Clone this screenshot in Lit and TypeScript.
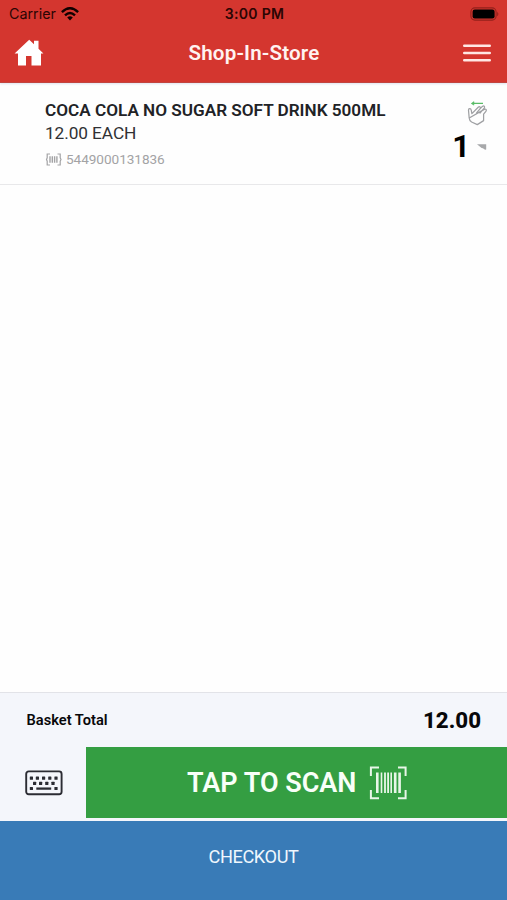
import { LitElement, html, css, svg } from "lit";
import { customElement } from "lit/decorators.js";

const keyRows: Array<[number, number[]]> = [
  [9.4, [6.4, 12.4, 18.6, 24.8, 31]],
  [14.6, [9.6, 15.6, 21.8, 28]],
  [19.8, [6.4, 31]],
];

@customElement("app-root")
export class AppRoot extends LitElement {
  static styles = css`
    :host {
      display: flex;
      flex-direction: column;
      width: 100%;
      height: 900px;
      background: #fefefe;
      font-family: Roboto, "Liberation Sans", sans-serif;
      color: #212226;
      overflow: hidden;
    }
    * { box-sizing: border-box; }
    svg { display: block; flex: none; }
    span { white-space: nowrap; }
    header {
      height: 83px;
      flex: none;
      background: #d4362f;
      border-bottom: 1px solid #c1453f;
      box-shadow: 0 1px 2px #dfe3ee;
    }
    .status {
      height: 27px;
      display: grid;
      grid-template-columns: 1fr auto 1fr;
      align-items: center;
      padding: 0 7px 0 9px;
      font-family: Inter, sans-serif;
      color: #2b0503;
    }
    .carrier { display: flex; align-items: center; gap: 5.5px; font-size: 14.3px; line-height: 27px; }
    .time { font-size: 14px; font-weight: 600; letter-spacing: .3px; }
    .battery { justify-self: end; }
    .nav {
      height: 51px;
      display: grid;
      grid-template-columns: 1fr auto 1fr;
      align-items: center;
      padding: 0 15px 0 14px;
    }
    .title { color: #fff3f1; font-size: 20.6px; font-weight: 600; letter-spacing: .15px; padding-left: 2px; line-height: 24px; }
    .menu { justify-self: end; }
    .item {
      height: 102px;
      flex: none;
      display: flex;
      justify-content: space-between;
      padding: 15px 19px 0 45px;
      border-bottom: 1px solid #e8e8ea;
    }
    .info { display: flex; flex-direction: column; }
    .name { font-size: 17.15px; font-weight: 600; line-height: 24px; }
    .price { font-size: 17.3px; line-height: 23px; color: #303134; letter-spacing: -.1px; }
    .code { display: flex; align-items: center; gap: 4px; margin-top: 4px; font-size: 13.6px; line-height: 20px; color: #a3a3a5; letter-spacing: -.05px; }
    .side { display: flex; flex-direction: column; align-items: flex-end; padding-top: 2px; }
    .qty { display: flex; align-items: center; gap: 6px; font-size: 31px; line-height: 36px; font-weight: 700; color: #000; margin-top: 3px; }
    main { flex: 1; }
    .total {
      height: 55px;
      flex: none;
      display: flex;
      align-items: center;
      justify-content: space-between;
      padding: 0 26px 0 26.5px;
      background: #f4f6fb;
      border-top: 1px solid #e2e3e8;
      color: #08080a;
    }
    .label { font-size: 14.65px; font-weight: 600; }
    .sum { font-size: 22.3px; font-weight: 800; }
    .scan-row { height: 74px; flex: none; display: flex; background: #f4f6fb; }
    .keys { width: 86px; height: 71px; display: flex; align-items: center; justify-content: center; padding-left: 1px; }
    .scan {
      flex: 1;
      height: 71px;
      display: flex;
      align-items: center;
      gap: 13px;
      padding-left: 101px;
      background: #349e42;
      color: #f8fff8;
      font-size: 27px;
      font-weight: 600;
    }
    .checkout {
      height: 79px;
      flex: none;
      background: #397bb7;
      color: #f0f7fd;
      text-align: center;
      font-size: 18.2px;
      letter-spacing: -.4px;
      line-height: 71px;
    }
  `;

  render() {
    return html`
      <header>
        <div class="status">
          <div class="carrier">
            <span>Carrier</span>
            <svg width="18" height="14" viewBox="0 0 18 14" fill="none" stroke="#100" stroke-width="2.4">
              <path d="M.9 5.1Q9-2.6 17.1 5.1M4 8.3Q9 3.6 14 8.3" />
              <path d="M6.2 10.4Q9 7.9 11.8 10.4L9 13.4Z" fill="#100" stroke="none" />
            </svg>
          </div>
          <span class="time">3:00 PM</span>
          <svg class="battery" width="30" height="14" viewBox="0 0 30 14">
            <rect x=".9" y=".9" width="25.2" height="12.2" rx="4" fill="none" stroke="#92201b" stroke-width="1.1" />
            <rect x="2.6" y="2.5" width="22" height="9" rx="2.2" fill="#000" />
            <path d="M27.2 4.7q2.4 2.3 0 4.6z" fill="#92201b" />
          </svg>
        </div>
        <div class="nav">
          <svg width="30" height="28" viewBox="0 0 30 28">
            <path d="M15.2 .8L.6 14.5H4V26.5H12V17H17.5V26.5H27V14.5H29.4L24.5 9.8V1.8H20V5.2Z" fill="#fff" />
          </svg>
          <span class="title">Shop-In-Store</span>
          <svg class="menu" width="30" height="18" viewBox="0 0 30 18" stroke="#ffe7e4" stroke-width="2.4" stroke-linecap="round">
            <path d="M2.2 1.8H27.8M2.2 9H27.8M2.2 16.2H27.8" />
          </svg>
        </div>
      </header>
      <section class="item">
        <div class="info">
          <span class="name">COCA COLA NO SUGAR SOFT DRINK 500ML</span>
          <span class="price">12.00 EACH</span>
          <div class="code">
            <svg width="17" height="13" viewBox="0 0 17 13" fill="none" stroke="#a3a3a5">
              <path d="M5 1H2.2V4.8L1.5 6.5L2.2 8.2V12H5M12.5 1H15.2V4.8L16 6.5L15.2 8.2V12H12.5" stroke-width="1.2" />
              <path d="M5 3.2V9.8M7.3 3.2V9.8M9.6 3.2V9.8M11.9 3.2V9.8" stroke-width="1.4" />
            </svg>
            <span>5449000131836</span>
          </div>
        </div>
        <div class="side">
          <svg width="21" height="26" viewBox="0 0 21 26" fill="none">
            <path d="M16 3.4H5M7.2 1.7L4.8 3.4L7.2 5.1" stroke="#59bd67" stroke-width="1.1" />
            <path d="M2.2 18L1.5 10.2C1.4 8.3 3.9 8.2 4.2 10L4.9 13.6L11.2 7.2C12.6 5.9 14.2 7.3 13 8.8L9.6 12.8M13 8.8L15.4 6.4C16.8 5.3 18.3 6.7 17.2 8.1L13 13M17.2 9.4C18.8 8.4 20 9.9 18.9 11.3L16.6 14.1V20.6L10.3 24.6L4.6 22C2.8 20.8 2.3 19.6 2.2 18Z" stroke="#9fa0a3" stroke-width="1.25" stroke-linejoin="round" stroke-linecap="round" />
          </svg>
          <div class="qty">
            <span>1</span>
            <svg width="12" height="8" viewBox="0 0 12 8"><path d="M1 1.2H10.2V6.6Q8.4 7 7 5.2L5.6 5Z" fill="#a7a8aa" /></svg>
          </div>
        </div>
      </section>
      <main></main>
      <section class="total">
        <span class="label">Basket Total</span>
        <span class="sum">12.00</span>
      </section>
      <section class="scan-row">
        <div class="keys">
          <svg width="38" height="26" viewBox="0 0 38 26">
            <rect x="1.2" y="1.4" width="35.4" height="22.8" rx="2.5" fill="none" stroke="#2b2c33" stroke-width="1.9" />
            ${keyRows.map(([y, xs]) => xs.map((x) => svg`<rect x=${x - 1.6} y=${y - 2.9} width="3.2" height="3.2" rx=".5" fill="#2b2c33" />`))}
            <path d="M11.3 18.6H26.2" stroke="#2b2c33" stroke-width="2.3" />
          </svg>
        </div>
        <div class="scan">
          <span>TAP TO SCAN</span>
          <svg width="38" height="34" viewBox="0 0 38 34" fill="none" stroke="#e8f6e8">
            <path d="M10 1.6H1.9V10M29 1.6H36.6V10M1.9 24V32.2H10M36.6 24V32.2H29" stroke-width="2" />
            <path d="M8.3 6.6V27M26.2 6.6V27M30.6 6.6V27" stroke-width="2.6" />
            <path d="M12.5 6.6V27M22.2 6.6V27" stroke-width="1.6" />
            <path d="M16 6.6V27M19.1 6.6V27" stroke-width="1.8" />
          </svg>
        </div>
      </section>
      <div class="checkout">CHECKOUT</div>
    `;
  }
}
